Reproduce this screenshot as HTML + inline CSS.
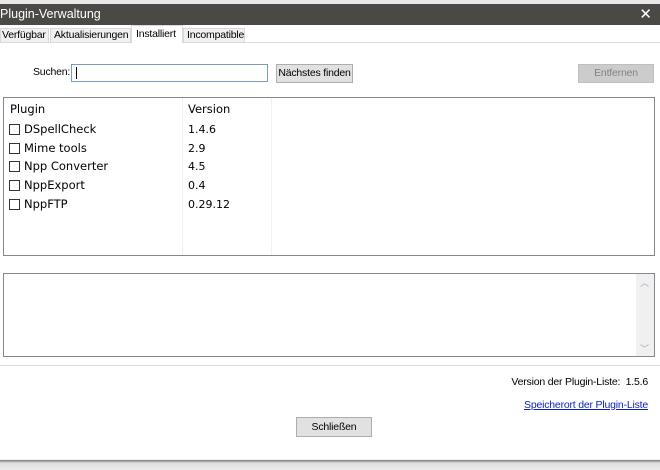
<!DOCTYPE html>
<html><head><meta charset="utf-8"><style>
*{margin:0;padding:0;box-sizing:border-box}
body{width:660px;height:470px;position:relative;overflow:hidden;background:#fff;font-family:"DejaVu Sans","Liberation Sans",sans-serif;font-size:11px;color:#000}
.a{position:absolute;white-space:nowrap}
.sm{font-family:"Liberation Sans",sans-serif;font-size:10.5px;letter-spacing:-0.2px}
.btn{position:absolute;white-space:nowrap;background:#e1e1e1;border:1px solid #adadad;text-align:center;font-family:"Liberation Sans",sans-serif;font-size:10.5px;letter-spacing:-0.2px;line-height:17px}
.cb{position:absolute;left:9px;width:11px;height:11px;border:1px solid #333;background:#fff}
.row{position:absolute;left:24px;font-size:11.5px}
.ver{position:absolute;left:188px;font-size:11px}
</style></head><body>
<div class="a" style="left:0;top:0;width:660px;height:4px;background:#e8e8e8"></div>
<div class="a" style="left:0;top:4px;width:660px;height:21px;background:#4b4946;color:#fff;font-size:12.5px;line-height:20px;font-family:'Liberation Sans',sans-serif">Plugin-Verwaltung</div>
<div class="a" style="right:8px;top:4px;color:#fff;font-size:15px;line-height:20px">✕</div>
<div class="a" style="left:0;top:42px;width:660px;height:1px;background:#dcdcdc"></div>
<div class="a sm" style="left:0;top:28px;width:49px;height:15px;background:#f0f0f0;border:1px solid #d9d9d9;line-height:13px;padding-left:1px">Verfügbar</div>
<div class="a sm" style="left:50px;top:28px;width:81px;height:15px;background:#f0f0f0;border:1px solid #d9d9d9;line-height:13px;padding-left:3px">Aktualisierungen</div>
<div class="a sm" style="left:131px;top:25px;width:52px;height:18px;background:#fff;border:1px solid #d9d9d9;border-bottom:none;line-height:16px;padding-left:4px">Installiert</div>
<div class="a sm" style="left:183px;top:28px;width:62px;height:15px;background:#f0f0f0;border:1px solid #d9d9d9;line-height:13px;padding-left:3px">Incompatible</div>

<div class="a sm" style="left:33px;top:66px">Suchen:</div>
<div class="a" style="left:71px;top:64px;width:197px;height:18px;border:1px solid #7a9cc0"></div>
<div class="a" style="left:76px;top:67px;width:1px;height:12px;background:#000"></div>
<div class="btn" style="left:276px;top:64px;width:77px;height:19px">Nächstes finden</div>
<div class="btn" style="left:578px;top:64px;width:76px;height:19px;background:#cccccc;border-color:#bfbfbf;color:#838383">Entfernen</div>

<div class="a" style="left:3px;top:97px;width:652px;height:159px;border:1px solid #828790"></div>
<div class="a" style="left:182px;top:98px;width:1px;height:157px;background:#f0f0f0"></div>
<div class="a" style="left:271px;top:98px;width:1px;height:157px;background:#f0f0f0"></div>
<div class="a" style="left:10px;top:102px;font-size:11.5px">Plugin</div>
<div class="a" style="left:188px;top:102px;font-size:11.5px">Version</div>
<div class="cb" style="top:124px"></div><div class="row" style="top:122px">DSpellCheck</div><div class="ver" style="top:123px">1.4.6</div>
<div class="cb" style="top:143px"></div><div class="row" style="top:141px">Mime tools</div><div class="ver" style="top:142px">2.9</div>
<div class="cb" style="top:161px"></div><div class="row" style="top:159px">Npp Converter</div><div class="ver" style="top:160px">4.5</div>
<div class="cb" style="top:180px"></div><div class="row" style="top:178px">NppExport</div><div class="ver" style="top:179px">0.4</div>
<div class="cb" style="top:199px"></div><div class="row" style="top:197px">NppFTP</div><div class="ver" style="top:198px">0.29.12</div>

<div class="a" style="left:3px;top:273px;width:652px;height:84px;border:1px solid #828790"></div>
<div class="a" style="left:636px;top:274px;width:18px;height:82px;background:#f0f0f0"></div>
<div class="a" style="left:640px;top:276px;color:#aaa;font-size:9px">︿</div>
<div class="a" style="left:640px;top:342px;color:#aaa;font-size:9px">﹀</div>

<div class="a" style="left:0;top:365px;width:660px;height:1px;background:#dcdcdc"></div>
<div class="a sm" style="right:12px;top:376px">Version der Plugin-Liste:&nbsp; 1.5.6</div>
<div class="a sm" style="right:12px;top:399px;color:#0b1fbf;text-decoration:underline">Speicherort der Plugin-Liste</div>
<div class="btn" style="left:296px;top:417px;width:76px;height:20px;line-height:18px">Schließen</div>
<div class="a" style="left:0;top:459px;width:660px;height:1px;background:#f2f2f2"></div>
<div class="a" style="left:0;top:460px;width:660px;height:10px;background:linear-gradient(#7a7a7a 0,#9a9a9a 1px,#dedede 3px,#ececec 10px)"></div>
</body></html>
